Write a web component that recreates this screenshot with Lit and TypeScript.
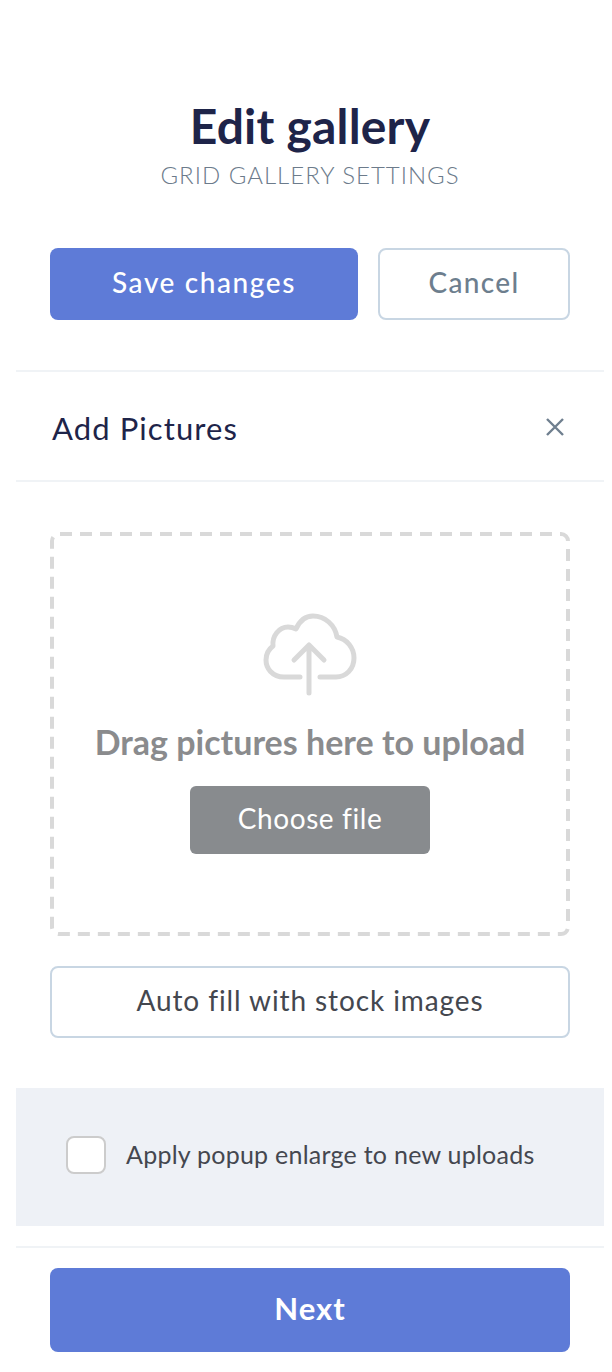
import { LitElement, html, css } from "lit";
import { customElement } from "lit/decorators.js";

@customElement("app-root")
export class AppRoot extends LitElement {
  static styles = css`
    :host { display: block; width: 612px; height: 1372px; background: #fff; font-family: Lato, "Open Sans", sans-serif; overflow: hidden; }
    * { box-sizing: border-box; }
    .panel { margin: 0 8px 0 16px; display: flex; flex-direction: column; }
    .head { padding-top: 99px; display: flex; flex-direction: column; align-items: center; }
    h1 { margin: 0; font-size: 48px; line-height: 54px; font-weight: 700; color: #1e2449; letter-spacing: 0.2px; }
    .sub { margin-top: 7px; font-size: 24px; line-height: 30px; letter-spacing: 1px; color: #6c7b8b; font-weight: 300; }
    .btn { display: flex; align-items: center; justify-content: center; border-radius: 8px; font-size: 28px; letter-spacing: 0.6px; padding-bottom: 4px; }
    .primary { background: #5e7bd7; color: #fff; font-weight: 500; }
    .outline { background: #fff; border: 2px solid #c8d6e3; }
    .actions { display: flex; gap: 20px; margin: 58px 34px 0; height: 72px; }
    .actions .primary { flex: 0 0 308px; letter-spacing: 1.6px; }
    .actions .outline { flex: 1; color: #6d7e8e; font-weight: 500; letter-spacing: 1.3px; }
    .title-row { margin-top: 50px; height: 112px; border-top: 2px solid #f0f3f6; border-bottom: 2px solid #f0f3f6; display: flex; align-items: center; justify-content: space-between; padding: 0 39px 0 36px; }
    .title-row span { font-size: 31px; color: #1e2449; letter-spacing: 1.1px; padding-top: 4px; }
    .close { display: block; margin-top: 2px; }
    .drop { position: relative; margin: 50px 34px 0; height: 404px; display: flex; flex-direction: column; align-items: center; }
    .dash { position: absolute; inset: 0; }
    .cloud { display: block; margin-top: 78px; }
    .drop p { margin: 22px 0 0; font-size: 34px; line-height: 40px; font-weight: 700; color: #8a8b8d; }
    .choose { width: 240px; height: 68px; margin-top: 24px; background: #888b8e; color: #fff; border-radius: 6px; font-size: 28px; font-weight: 400; }
    .stock { margin: 30px 34px 0; height: 72px; color: #44474f; font-size: 28px; letter-spacing: 0.9px; }
    .band { margin-top: 50px; height: 138px; background: #eef1f6; display: flex; align-items: center; padding: 0 0 4px 50px; gap: 20px; }
    .check { width: 40px; height: 38px; border: 2px solid #cccccc; border-radius: 8px; background: #fff; }
    .band span { font-size: 25px; color: #44474f; letter-spacing: 0.25px; padding-bottom: 2px; }
    .foot { margin-top: 20px; padding: 20px 34px 0; border-top: 2px solid #f0f3f6; }
    .next { height: 84px; font-size: 31px; font-weight: 700; letter-spacing: 1px; }
  `;

  render() {
    return html`
      <div class="panel">
        <div class="head">
          <h1>Edit gallery</h1>
          <div class="sub">GRID GALLERY SETTINGS</div>
        </div>
        <div class="actions">
          <div class="btn primary">Save changes</div>
          <div class="btn outline">Cancel</div>
        </div>
        <div class="title-row">
          <span>Add Pictures</span>
          <svg class="close" width="20" height="20" viewBox="0 0 20 20" fill="none" stroke="#6f7f8f" stroke-width="2.4">
            <path d="M2 2 L18 18 M18 2 L2 18" />
          </svg>
        </div>
        <div class="drop">
          <svg class="dash" width="520" height="404" viewBox="0 0 520 404" fill="none">
            <rect x="2" y="2" width="516" height="400" rx="7" stroke="#d9d9d9" stroke-width="4" stroke-dasharray="12 8" stroke-dashoffset="-1" />
          </svg>
          <svg class="cloud" width="100" height="90" viewBox="260 610 100 90" fill="none" stroke="#d9d9d9" stroke-width="5" stroke-linecap="round" stroke-linejoin="round">
            <path d="M300 677 H284 C272 677 266 668 266 660 C266 654 269 649 273 646 C272 636 279 627 288 627 C292 627 294 628 296 629 C300 620 306 616 313 616 C325 616 335 625 337 637 C347 639 354 648 354 658 C354 669 346 677 336 677 H320" />
            <path d="M309 693 V646 M294 660 L309 645 L324 660" />
          </svg>
          <p>Drag pictures here to upload</p>
          <div class="btn choose">Choose file</div>
        </div>
        <div class="btn outline stock">Auto fill with stock images</div>
        <div class="band">
          <div class="check"></div>
          <span>Apply popup enlarge to new uploads</span>
        </div>
        <div class="foot">
          <div class="btn primary next">Next</div>
        </div>
      </div>
    `;
  }
}
